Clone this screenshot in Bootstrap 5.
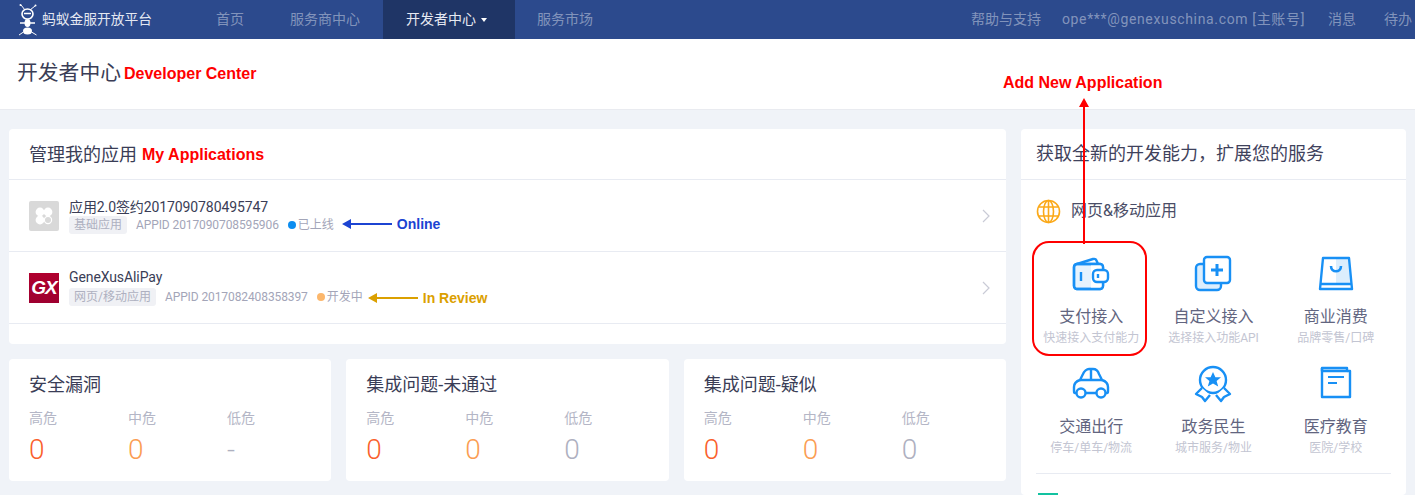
<!DOCTYPE html>
<html lang="zh-CN">
<head>
  <meta charset="UTF-8">
  <meta name="viewport" content="width=device-width, initial-scale=1.0">
  <title>蚂蚁金服开放平台</title>
  <link href="https://cdn.jsdelivr.net/npm/bootstrap@5.3.3/dist/css/bootstrap.min.css" rel="stylesheet">
  <style>
    html, body {
      height: 495px;
      overflow: hidden;
    }
    body {
      background-color: #f0f3f8;
      font-family: Roboto, "Noto Sans CJK SC", sans-serif;
      color: #3a3d56;
      position: relative;
    }
    .top-bar {
      background-color: #2c4a8d;
      height: 39px;
      padding: 0;
      flex-wrap: nowrap;
      font-size: 14px;
    }
    .top-bar .top-brand {
      width: 193px;
      padding: 0 0 0 17px;
      margin: 0;
      font-size: 13.75px;
      color: #e4e8f2;
      gap: 3px;
    }
    .top-bar .navbar-nav .nav-link {
      color: rgba(255, 255, 255, .42);
      height: 39px;
      line-height: 39px;
      padding: 0 23px;
    }
    .top-bar .navbar-nav .nav-link.active {
      color: #e6e9f2;
      background-color: #1f3566;
      padding-right: 28px;
      margin-right: -1px;
    }
    .top-bar .dropdown-toggle::after {
      vertical-align: 2px;
      margin-left: 5px;
      border-top-width: 4px;
      border-left-width: 3px;
      border-right-width: 3px;
      color: #fff;
    }
    .top-right {
      white-space: nowrap;
      color: rgba(255, 255, 255, .42);
      margin-left: auto;
      margin-right: 3px;
      line-height: 39px;
    }
    .top-mail { margin: 0 23px 0 21px; letter-spacing: .65px; }
    .top-todo { margin-left: 28px; }
    .sub-head {
      height: 71px;
      padding-left: 17px;
      padding-bottom: 1px;
      border-bottom: 1px solid #e9ebf0;
    }
    .sub-title {
      font-size: 20.8px;
      color: #3a3d56;
      margin-right: 3px;
    }
    .note-red, .note-blue, .note-gold {
      font-family: "Liberation Sans", sans-serif;
      font-weight: 700;
      font-size: 14px;
    }
    .note-red { color: #f00; }
    .note-blue { color: #1c44d2; }
    .note-gold { color: #dba000; }
    .note-head { font-size: 16px; }
    .page-cols {
      padding: 19px 9px 0;
      gap: 15px;
    }
    .left-col { width: 997px; }
    .right-col { width: 385px; }
    .panel {
      background: #fff;
      border-radius: 4px;
    }
    .panel-head {
      height: 51px;
      padding-left: 20px;
      font-size: 16px;
      border-bottom: 1px solid #e8ebf2;
    }
    .panel-head-text { font-size: 18px; margin-right: 5px; }
    .panel-head .note-head { position: relative; top: 1px; }
    .app-row {
      height: 72px;
      padding: 0 20px;
      border-bottom: 1px solid #e8ebf2;
      gap: 10px;
    }
    .app-list { padding-bottom: 20px; }
    .app-logo {
      width: 30px;
      height: 30px;
      flex: none;
    }
    .app-logo-grey {
      background: #d9d9d9;
      border-radius: 2px;
    }
    .app-logo-gx {
      background: linear-gradient(#b0002e, #9e0030);
      color: #fff;
      font: italic 700 19px/30px "Liberation Sans", sans-serif;
      text-align: center;
      letter-spacing: -1px;
    }
    .app-name { font-size: 14px; line-height: 18px; color: #3a3d56; letter-spacing: -.1px; }
    .app-meta {
      font-size: 12px;
      line-height: 18px;
      color: #a3a5b8;
      gap: 9px;
    }
    .app-id { letter-spacing: -.1px; }
    .app-type {
      background: #f0f1f5;
      border-radius: 3px;
      padding: 0 5px;
      color: #aeb0c0;
    }
    .app-state { gap: 2px; }
    .state-dot {
      width: 8px;
      height: 8px;
      border-radius: 50%;
    }
    .dot-online { background: #0c8df0; }
    .dot-dev { background: #fcb76c; }
    .app-note { gap: 5px; }
    .note-online { margin: -2px 0 0 -1px; }
    .note-review { margin: 3px 0 0 -4px; }
    .app-chevron { margin-left: auto; margin-right: -4px; }
    .stat-row { gap: 15px; margin-top: 15px; }
    .stat-box {
      flex: 1 1 0;
      height: 122px;
      padding: 14px 20px 0;
    }
    .stat-title { font-size: 18px; line-height: 24px; }
    .stat-cols { display: grid; grid-template-columns: 99px 99px 1fr; margin-top: 11px; }
    .stat-label { font-size: 14px; line-height: 20px; color: #b4b6c6; }
    .stat-num { font-size: 28px; line-height: 34px; margin-top: 5px; font-weight: 300; }
    .num-high { color: #fa5f2c; }
    .num-mid { color: #fb9d52; }
    .num-low { color: #aeb0c0; }
    .right-head {
      height: 51px;
      padding: 0 0 2px 15px;
      font-size: 18px;
      border-bottom: 1px solid #e8ebf2;
      color: #3f425c;
    }
    .cat-head {
      height: 62px;
      padding-left: 15px;
      gap: 10px;
      font-size: 16px;
      color: #4a4d66;
    }
    .tile-grid {
      display: grid;
      grid-template-columns: repeat(3, 1fr);
      padding: 2px 9px 0;
    }
    .tile {
      height: 110px;
      text-align: center;
      padding-top: 11px;
      position: relative;
    }
    .tile-icon { height: 38px; display: block; margin: 0 auto; }
    .tile-name { font-size: 16px; line-height: 20px; margin-top: 14px; color: #62657f; }
    .tile-sub { font-size: 12px; line-height: 16px; margin-top: 3px; color: #c3c5d2; white-space: nowrap; }
    .tile-mark {
      position: absolute;
      left: 2px;
      top: -3px;
      width: 115px;
      height: 115px;
      border: 2px solid #f00;
      border-radius: 17px;
    }
    .tile-rule {
      margin: 9px 15px 0;
      border-top: 1px solid #e8ebf2;
    }
    .next-mark {
      margin: 19px 17px 0;
      width: 20px;
      height: 2px;
      background: #12c2a0;
    }
    .add-note {
      position: absolute;
      left: 1003px;
      top: 71px;
      font-size: 16px;
      white-space: nowrap;
    }
    .add-arrow {
      position: absolute;
      left: 1078px;
      top: 98px;
    }
  </style>
</head>
<body>

<!-- Navbar -->
<nav class="navbar navbar-expand top-bar">
  <a class="navbar-brand d-flex align-items-center top-brand" href="#">
    <svg width="22" height="34" viewBox="0 0 22 34" fill="none" stroke="#fff">
      <path d="M8 7 4 2M13 7l5-4" stroke-width="1"/>
      <circle cx="3.500" cy="2" r="1" fill="#fff" stroke="none"/>
      <circle cx="18.500" cy="2.500" r="1" fill="#fff" stroke="none"/>
      <ellipse cx="10.500" cy="11" rx="5.500" ry="5" stroke-width="1.600"/>
      <path d="M7 10.500h7" stroke-width="1.500"/>
      <path d="M3 20h15" stroke-width="1.500"/>
      <ellipse cx="10.500" cy="20" rx="3" ry="4" fill="#fff" stroke="none"/>
      <ellipse cx="10.500" cy="28" rx="4.500" ry="3.500" fill="#fff" stroke="none"/>
      <path d="M6.500 29 2 32M14.500 29l5 3" stroke-width="1"/>
    </svg>
    蚂蚁金服开放平台
  </a>
  <ul class="navbar-nav">
    <li class="nav-item"><a class="nav-link" href="#">首页</a></li>
    <li class="nav-item"><a class="nav-link" href="#">服务商中心</a></li>
    <li class="nav-item"><a class="nav-link active dropdown-toggle" href="#">开发者中心</a></li>
    <li class="nav-item"><a class="nav-link" href="#">服务市场</a></li>
  </ul>
  <div class="d-flex top-right">
    <span>帮助与支持</span>
    <span class="top-mail">ope***@genexuschina.com [主账号]</span>
    <span>消息</span>
    <span class="top-todo">待办</span>
  </div>
</nav>

<!-- Page title -->
<div class="bg-white d-flex align-items-center sub-head">
  <span class="sub-title">开发者中心</span>
  <span class="note-red note-head">Developer Center</span>
</div>

<div class="d-flex align-items-start page-cols">
  <div class="left-col">
    <!-- Applications -->
    <div class="panel app-list">
      <div class="d-flex align-items-center panel-head">
        <span class="panel-head-text">管理我的应用</span>
        <span class="note-red note-head">My Applications</span>
      </div>
      <div class="d-flex align-items-center app-row">
        <svg class="app-logo app-logo-grey" viewBox="0 0 30 30">
          <circle cx="11" cy="11" r="4.400" fill="#fff"/>
          <circle cx="19" cy="11" r="4.400" fill="#fff"/>
          <circle cx="11" cy="19" r="4.400" fill="#fff"/>
          <circle cx="19" cy="19" r="3.600" fill="none" stroke="#fff" stroke-width="1.200"/>
        </svg>
        <div>
          <div class="app-name">应用2.0签约2017090780495747</div>
          <div class="d-flex align-items-center app-meta">
            <span class="app-type">基础应用</span>
            <span class="app-id">APPID 2017090708595906</span>
            <span class="d-flex align-items-center app-state"><span class="state-dot dot-online"></span>已上线</span>
            <span class="d-flex align-items-center app-note note-online">
              <svg width="50" height="10" viewBox="0 0 50 10"><path d="M0 5 9 0v4h41v2H9v4z" fill="#1c44d2"/></svg>
              <span class="note-blue">Online</span>
            </span>
          </div>
        </div>
        <svg class="app-chevron" width="8" height="14" viewBox="0 0 8 14" fill="none" stroke="#c9cbd6" stroke-width="1.200"><path d="m1 1 6 6-6 6"/></svg>
      </div>
      <div class="d-flex align-items-center app-row">
        <div class="app-logo app-logo-gx">GX</div>
        <div>
          <div class="app-name">GeneXusAliPay</div>
          <div class="d-flex align-items-center app-meta">
            <span class="app-type">网页/移动应用</span>
            <span class="app-id">APPID 2017082408358397</span>
            <span class="d-flex align-items-center app-state"><span class="state-dot dot-dev"></span>开发中</span>
            <span class="d-flex align-items-center app-note note-review">
              <svg width="50" height="10" viewBox="0 0 50 10"><path d="M0 5 9 0v4h41v2H9v4z" fill="#dba000"/></svg>
              <span class="note-gold">In Review</span>
            </span>
          </div>
        </div>
        <svg class="app-chevron" width="8" height="14" viewBox="0 0 8 14" fill="none" stroke="#c9cbd6" stroke-width="1.200"><path d="m1 1 6 6-6 6"/></svg>
      </div>
    </div>

    <!-- Stats -->
    <div class="d-flex stat-row" id="statRow"></div>
  </div>

  <!-- Services -->
  <div class="panel right-col">
    <div class="d-flex align-items-center right-head">获取全新的开发能力，扩展您的服务</div>
    <div class="d-flex align-items-center cat-head">
      <svg width="25" height="25" viewBox="0 0 25 25" fill="none" stroke="#fba919" stroke-width="1.600">
        <circle cx="12.500" cy="12.500" r="11"/>
        <ellipse cx="12.500" cy="12.500" rx="5" ry="11"/>
        <path d="M12.500 1.500v22M2.500 8h20M2.500 17h20"/>
      </svg>
      网页&amp;移动应用
    </div>
    <div class="tile-grid">
      <div class="tile">
        <svg class="tile-icon" width="38" height="38" viewBox="0 0 38 38" fill="none" stroke="#1890f5" stroke-width="2.400" stroke-linejoin="round">
          <path d="M5 9 21 4c2-.5 3 .2 3.500 1.500L26 9"/>
          <rect x="2" y="9" width="29" height="25" rx="3" fill="#e6f3fe"/>
          <path d="M19 9h12v25H19z" fill="#fff" stroke="none"/>
          <rect x="2" y="9" width="29" height="25" rx="3"/>
          <rect x="21" y="15" width="15" height="12" rx="4" fill="#fff"/>
          <path d="M9 17v9M26 19v4"/>
        </svg>
        <div class="tile-name">支付接入</div>
        <div class="tile-sub">快速接入支付能力</div>
        <div class="tile-mark"></div>
      </div>
      <div class="tile">
        <svg class="tile-icon" width="38" height="38" viewBox="0 0 38 38" fill="none" stroke="#1890f5" stroke-width="2.400" stroke-linejoin="round">
          <rect x="2" y="9" width="25" height="26" rx="4" fill="#dceefd"/>
          <rect x="10" y="2" width="26" height="26" rx="3" fill="#fff"/>
          <path d="M23 9v12M17 15h12" stroke-width="3"/>
        </svg>
        <div class="tile-name">自定义接入</div>
        <div class="tile-sub">选择接入功能API</div>
      </div>
      <div class="tile">
        <svg class="tile-icon" width="38" height="38" viewBox="0 0 38 38" fill="none" stroke="#1890f5" stroke-width="2.400" stroke-linejoin="round">
          <path d="M19 3h13l2 26H19z" fill="#dceefd" stroke="none"/>
          <path d="M6 3h26l3 31H3zM3.500 29h31"/>
          <path d="M14 11c0 7 10 7 10 0" stroke-width="2.600"/>
        </svg>
        <div class="tile-name">商业消费</div>
        <div class="tile-sub">品牌零售/口碑</div>
      </div>
      <div class="tile">
        <svg class="tile-icon" width="38" height="38" viewBox="0 0 38 38" fill="none" stroke="#1890f5" stroke-width="2.400" stroke-linejoin="round">
          <path d="M5 28H3c-1 0-1-1-1-2v-4c0-4 3-6 6-7l3-6c1-3 4-5 6-5h4c3 0 5 2 6 5l3 6c3 1 6 3 6 7v4c0 1 0 2-1 2h-2"/>
          <path d="M8 15h22M19 4v11M13.500 28h11"/>
          <circle cx="9" cy="28" r="4.500"/>
          <circle cx="29" cy="28" r="4.500"/>
        </svg>
        <div class="tile-name">交通出行</div>
        <div class="tile-sub">停车/单车/物流</div>
      </div>
      <div class="tile">
        <svg class="tile-icon" width="38" height="38" viewBox="0 0 38 38" fill="none" stroke="#1890f5" stroke-width="2.400" stroke-linejoin="round">
          <circle cx="19" cy="15" r="13"/>
          <path d="m19 7 2.400 5.200h5.600l-4.400 3.800 1.600 5.600-5.200-3.200-5.200 3.200 1.600-5.600-4.400-3.800h5.600z" fill="#1890f5" stroke="none"/>
          <path d="M8 23 2 29l6 3 3 4 5-6M30 23l6 6-6 3-3 4-5-6" fill="#fff"/>
        </svg>
        <div class="tile-name">政务民生</div>
        <div class="tile-sub">城市服务/物业</div>
      </div>
      <div class="tile">
        <svg class="tile-icon" width="38" height="38" viewBox="0 0 38 38" fill="none" stroke="#1890f5" stroke-width="2.400" stroke-linejoin="round">
          <path d="M5 3h25v3H5z"/>
          <path d="M5 3v29h28V6h-3"/>
          <path d="M11 12h16M11 18h9" stroke-width="2.200"/>
        </svg>
        <div class="tile-name">医疗教育</div>
        <div class="tile-sub">医院/学校</div>
      </div>
    </div>
    <div class="tile-rule"></div>
    <div class="next-mark"></div>
  </div>
</div>

<!-- Add New Application callout -->
<span class="note-red add-note">Add New Application</span>
<svg class="add-arrow" width="12" height="146" viewBox="0 0 12 146"><path d="M6 0l5 9H7v137H5V9H1z" fill="#f00"/></svg>

<script src="https://cdn.jsdelivr.net/npm/bootstrap@5.3.3/dist/js/bootstrap.bundle.min.js"></script>
<script>
const stats = [
  { title: "安全漏洞", low: "-" },
  { title: "集成问题-未通过", low: "0" },
  { title: "集成问题-疑似", low: "0" }
];

document.getElementById("statRow").innerHTML = stats.map(s => `
  <div class="panel stat-box">
    <div class="stat-title">${s.title}</div>
    <div class="stat-cols">
      <div><div class="stat-label">高危</div><div class="stat-num num-high">0</div></div>
      <div><div class="stat-label">中危</div><div class="stat-num num-mid">0</div></div>
      <div><div class="stat-label">低危</div><div class="stat-num num-low">${s.low}</div></div>
    </div>
  </div>
`).join("");
</script>
</body>
</html>
